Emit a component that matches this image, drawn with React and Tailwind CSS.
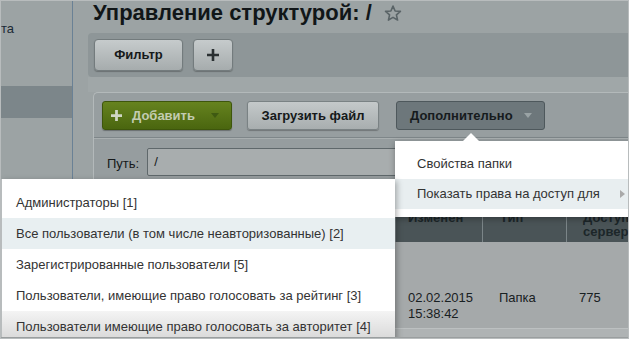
import React from "react";

const font = { fontFamily: '"Liberation Sans", Arial, sans-serif' };

function Caret({ color }) {
  return (
    <svg width="8" height="5" viewBox="0 0 8 5" className="shrink-0">
      <path d="M0 0 L8 0 L4 5 Z" fill={color} />
    </svg>
  );
}

function Star() {
  return (
    <svg width="18" height="16" viewBox="0 0 24 22" className="shrink-0">
      <path
        d="M12 1.5 L14.9 8.2 L22.2 8.8 L16.7 13.6 L18.3 20.7 L12 17 L5.7 20.7 L7.3 13.6 L1.8 8.8 L9.1 8.2 Z"
        fill="none"
        stroke="#5a6467"
        strokeWidth="2.2"
        strokeLinejoin="round"
      />
    </svg>
  );
}

function Plus({ color, size = 12, w = 3 }) {
  return (
    <svg width={size} height={size} viewBox="0 0 12 12" className="shrink-0">
      <path d="M6 0 V12 M0 6 H12" stroke={color} strokeWidth={w} />
    </svg>
  );
}

export default function App() {
  const subItems = [
    "Администраторы [1]",
    "Все пользователи (в том числе неавторизованные) [2]",
    "Зарегистрированные пользователи [5]",
    "Пользователи, имеющие право голосовать за рейтинг [3]",
    "Пользователи имеющие право голосовать за авторитет [4]",
  ];
  return (
    <div
      className="relative w-[629px] h-[339px] overflow-hidden border border-[#b8bcbd] bg-[#9ca3a4] text-[13px]"
      style={font}
    >
      <div className="flex h-full">
        {/* Sidebar */}
        <div className="w-[72px] shrink-0 border-r border-[#6a8195] h-full flex flex-col">
          <div className="h-[85px] pt-[20px] text-[#1b2a36] leading-[16px]">та</div>
          <div className="h-[32px] bg-[#7c868a]" />
        </div>

        {/* Main */}
        <div className="flex-1 min-w-0 pl-[15px] flex flex-col">
          <div className="h-[32px] pl-[5px] flex items-start gap-[12px]">
            <div className="text-[22px] leading-[24px] font-bold text-[#111618] whitespace-nowrap">
              Управление структурой: /
            </div>
            <div className="mt-[4px]">
              <Star />
            </div>
          </div>

          {/* Filter panel */}
          <div className="h-[44px] rounded-l-[4px] bg-[#8e9698] flex items-start gap-[10px] pt-[6px] pl-[6px]">
            <div className="w-[89px] h-[32px] rounded-[4px] border border-[#737b7d] bg-gradient-to-b from-[#c6cbcc] to-[#a6acad] flex items-center justify-center font-bold text-[#15191a] shadow-[0_1px_1px_rgba(0,0,0,0.25)]">
              Фильтр
            </div>
            <div className="w-[40px] h-[32px] rounded-[4px] border border-[#737b7d] bg-gradient-to-b from-[#c6cbcc] to-[#a6acad] flex items-center justify-center shadow-[0_1px_1px_rgba(0,0,0,0.25)]">
              <Plus color="#2a3032" size={12} w={2.6} />
            </div>
          </div>

          <div className="h-[15px] bg-[#a0a7a8]" />

          {/* Panel 2 */}
          <div className="ml-[5px] flex-1 border-t border-l border-[#b3b9ba] rounded-tl-[5px] bg-[#979ea0] flex flex-col">
            <div className="h-[45px] pt-[8px] pl-[8px] flex items-start border-b border-[#7e8689]">
              <div className="w-[130px] h-[29px] rounded-[3px] border border-[#3e560c] bg-gradient-to-b from-[#66831f] to-[#4a660f] flex items-center pl-[8px] pr-[12px] shadow-[0_1px_1px_rgba(0,0,0,0.3)]">
                <Plus color="#cfd6c4" size={11} w={3} />
                <span className="ml-[10px] font-bold text-[#c3ccb2]">Добавить</span>
                <span className="ml-auto">
                  <Caret color="#3f5a12" />
                </span>
              </div>
              <div className="ml-[15px] w-[132px] h-[29px] rounded-[3px] border border-[#7a8284] bg-gradient-to-b from-[#c4c9ca] to-[#a8aeaf] flex items-center justify-center font-bold text-[#15191a] shadow-[0_1px_1px_rgba(0,0,0,0.25)]">
                Загрузить файл
              </div>
              <div className="ml-[17px] w-[149px] h-[29px] rounded-[3px] border border-[#4e585c] bg-[#6d777b] flex items-center pl-[13px] pr-[12px] font-bold text-[#161b1d]">
                Дополнительно
                <span className="ml-auto">
                  <Caret color="#9aa3a5" />
                </span>
              </div>
            </div>
            <div className="h-[71px] border-t border-[#a9afb0] bg-[#969d9f] pl-[13px] pt-[9px] flex items-start">
              <span className="mt-[6px] text-[#15191a]">Путь:</span>
              <div className="ml-[8px] flex-1 h-[28px] rounded-[2px] border border-[#5f686b] bg-[#a8adae] pl-[6px] flex items-center text-[#15191a]">
                /
              </div>
            </div>

            {/* Table */}
            <div className="flex flex-col flex-1">
              <div className="h-[33px] flex bg-[#4a5457] font-bold text-[#1c2629] leading-[14px]">
                <div className="w-[301px] shrink-0" />
                <div className="w-[87px] shrink-0 border-l border-[#7b8588] pl-[12px] pt-[2px]">Изменен</div>
                <div className="w-[84px] shrink-0 border-l border-[#7b8588] pl-[17px] pt-[2px]">Тип</div>
                <div className="flex-1 border-l border-[#7b8588] pl-[16px] pt-[2px] w-[80px]">
                  Доступ
                  <br />
                  сервер
                </div>
              </div>
              <div className="h-[38px] bg-[#a5a9aa]" />
              <div className="h-[49px] bg-[#a5a9aa] flex border-b border-[#bcc0c1] text-[#182022] leading-[16px]">
                <div className="w-[301px] shrink-0" />
                <div className="w-[87px] shrink-0 pl-[13px] pt-[10px]">
                  02.02.2015
                  <br />
                  15:38:42
                </div>
                <div className="w-[84px] shrink-0 pl-[17px] pt-[10px]">Папка</div>
                <div className="flex-1 pl-[13px] pt-[10px]">775</div>
              </div>
              <div className="flex-1 bg-[#afb3b4]" />
            </div>
          </div>
        </div>
      </div>

      {/* Dropdown 1 */}
      <div className="absolute left-[394px] top-[140px] w-[240px] h-[76px] bg-white shadow-[0_2px_6px_rgba(0,0,0,0.3)] pt-[8px] text-[#333333]">
        <div className="absolute -top-[8px] left-[68px] w-0 h-0 border-l-[8px] border-r-[8px] border-b-[8px] border-l-transparent border-r-transparent border-b-white" />
        <div className="h-[30px] pl-[22px] flex items-center whitespace-nowrap">Свойства папки</div>
        <div className="h-[30px] pl-[22px] pr-[10px] flex items-center bg-[#e8eef0] whitespace-nowrap">
          Показать права на доступ для
          <svg width="5" height="8" viewBox="0 0 5 8" className="ml-[20px] shrink-0">
            <path d="M0 0 L5 4 L0 8 Z" fill="#a9a9a9" />
          </svg>
        </div>
      </div>

      {/* Submenu */}
      <div className="absolute left-0 top-[178px] w-[394px] h-[170px] bg-white border-l border-[#b8bcbd] shadow-[2px_2px_6px_rgba(0,0,0,0.3)] pt-[8px] text-[#333333]">
        {subItems.map((t, i) => (
          <div
            key={i}
            className={
              "h-[31px] pl-[14px] flex items-center whitespace-nowrap " +
              (i === 1 ? "bg-[#e8eff1]" : i === 4 ? "bg-gradient-to-b from-[#f4f4f4] to-[#d6d6d6]" : "")
            }
          >
            {t}
          </div>
        ))}
      </div>
      <div className="absolute left-0 bottom-0 w-full h-[1px] bg-[#9a9e9f]" />
    </div>
  );
}
